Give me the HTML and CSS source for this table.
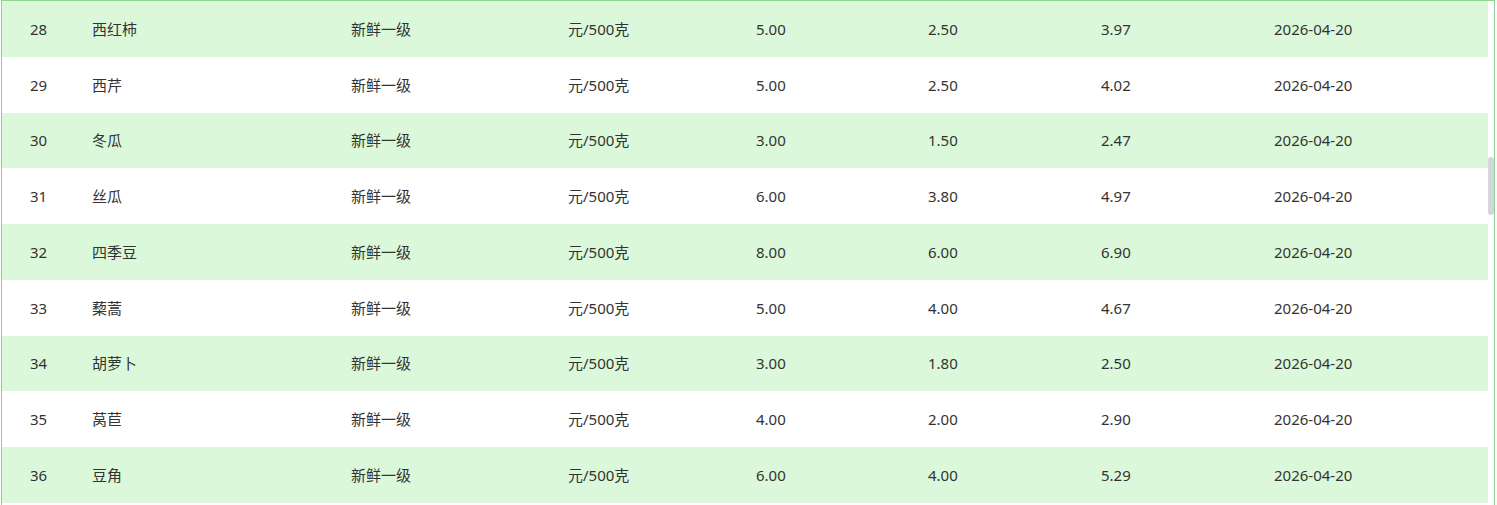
FILE: index.html
```html
<!DOCTYPE html>
<html lang="zh">
<head>
<meta charset="utf-8">
<title>价格表</title>
<link rel="stylesheet" href="styles.css">
</head>
<body>
<div class="panel">
  <div class="table">
    <div class="row alt"><span class="c1">28</span><span>西红柿</span><span>新鲜一级</span><span>元/500克</span><span>5.00</span><span>2.50</span><span>3.97</span><span>2026-04-20</span></div>
    <div class="row"><span class="c1">29</span><span>西芹</span><span>新鲜一级</span><span>元/500克</span><span>5.00</span><span>2.50</span><span>4.02</span><span>2026-04-20</span></div>
    <div class="row alt"><span class="c1">30</span><span>冬瓜</span><span>新鲜一级</span><span>元/500克</span><span>3.00</span><span>1.50</span><span>2.47</span><span>2026-04-20</span></div>
    <div class="row"><span class="c1">31</span><span>丝瓜</span><span>新鲜一级</span><span>元/500克</span><span>6.00</span><span>3.80</span><span>4.97</span><span>2026-04-20</span></div>
    <div class="row alt"><span class="c1">32</span><span>四季豆</span><span>新鲜一级</span><span>元/500克</span><span>8.00</span><span>6.00</span><span>6.90</span><span>2026-04-20</span></div>
    <div class="row"><span class="c1">33</span><span>蔾蒿</span><span>新鲜一级</span><span>元/500克</span><span>5.00</span><span>4.00</span><span>4.67</span><span>2026-04-20</span></div>
    <div class="row alt"><span class="c1">34</span><span>胡萝卜</span><span>新鲜一级</span><span>元/500克</span><span>3.00</span><span>1.80</span><span>2.50</span><span>2026-04-20</span></div>
    <div class="row"><span class="c1">35</span><span>莴苣</span><span>新鲜一级</span><span>元/500克</span><span>4.00</span><span>2.00</span><span>2.90</span><span>2026-04-20</span></div>
    <div class="row alt"><span class="c1">36</span><span>豆角</span><span>新鲜一级</span><span>元/500克</span><span>6.00</span><span>4.00</span><span>5.29</span><span>2026-04-20</span></div>
  </div>
  <div class="scrollbar"><div class="thumb"></div></div>
</div>
</body>
</html>
```

FILE: styles.css
```css
html, body {
  margin: 0;
  padding: 0;
  background: #ffffff;
}
body {
  font-family: "Noto Sans", "Noto Sans CJK SC", sans-serif;
  font-size: 15px;
  color: #333333;
  overflow: hidden;
}
.panel {
  margin-left: 1px;
  width: 1494px;
  height: 520px;
  box-sizing: border-box;
  border: 1px solid #8fd48f;
  position: relative;
  display: flex;
}
.table {
  width: 1486px;
}
.row {
  display: grid;
  grid-template-columns: 90px 259px 217px 188px 172px 173px 173px 214px;
  height: 55.75px;
  align-items: center;
  line-height: 20px;
}
.row.alt {
  background: #dbf9da;
}
.row span.c1 {
  padding-left: 28px;
}
.scrollbar {
  position: absolute;
  right: 0;
  top: 0;
  width: 6px;
  height: 100%;
}
.thumb {
  position: absolute;
  top: 156px;
  left: 0;
  width: 6px;
  height: 58px;
  border-radius: 3px;
  background: #d3d6da;
}
```
